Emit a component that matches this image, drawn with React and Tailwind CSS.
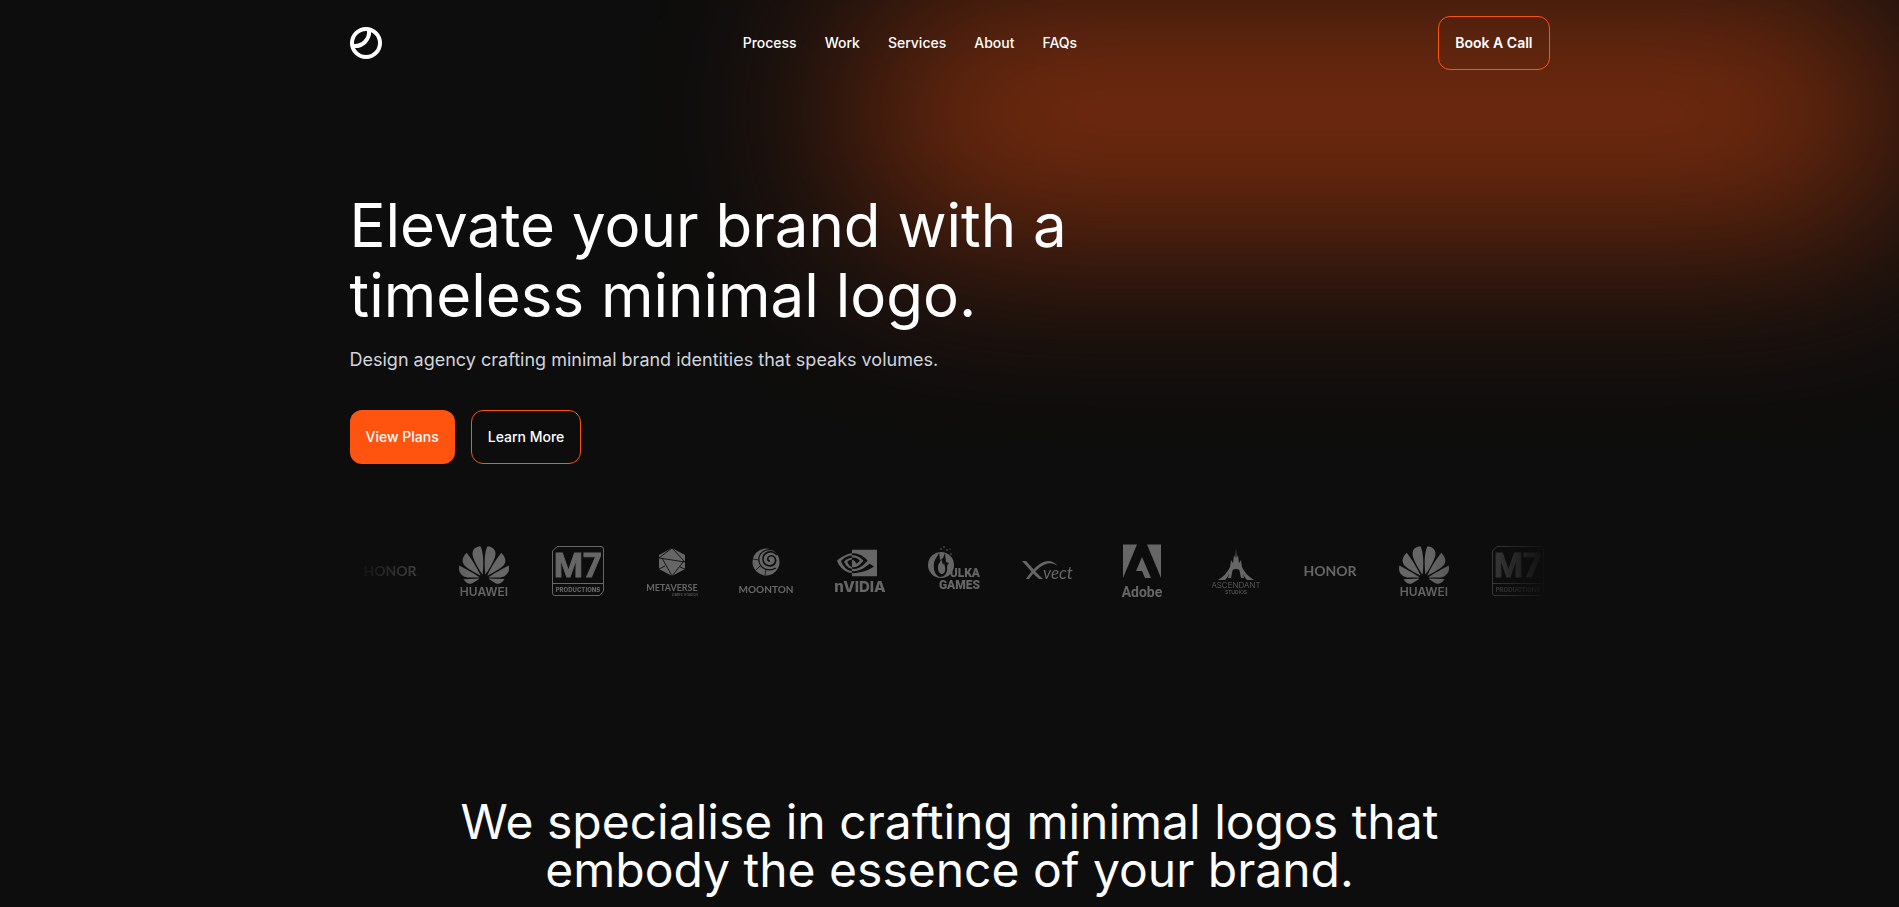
import { SiHuawei, SiNvidia } from 'react-icons/si';

const navLinks = ['Process', 'Work', 'Services', 'About', 'FAQs'];

function Logo() {
  return (
    <svg viewBox="0 0 32 32" className="size-8" fill="none" stroke="white" strokeWidth="4" aria-hidden="true">
      <circle cx="16" cy="16" r="14" />
      <path d="M19 3C20 12 13 20 3 19" />
    </svg>
  );
}

// Every brand mark is drawn on the same 54x54 box
function Mark({ name, children }) {
  return (
    <svg viewBox="0 0 54 54" role="img" aria-label={name} className="size-[54px] shrink-0 overflow-visible" fill="#666">
      {children}
    </svg>
  );
}

function Honor() {
  return (
    <Mark name="Honor">
      <text x="28" y="32" textAnchor="middle" className="font-[Lato] font-bold text-[14px]">HONOR</text>
    </Mark>
  );
}

function Huawei() {
  return (
    <Mark name="Huawei">
      <SiHuawei x="3" y="-4" size={50} fill="#666" />
      <text x="28" y="52" textAnchor="middle" className="font-semibold text-[12px]">HUAWEI</text>
    </Mark>
  );
}

function M7() {
  return (
    <Mark name="M7 Productions">
      <path d="M7 2.5H51a2.5 2.5 0 0 1 2.5 2.5V47l-4 4.5H5A2.5 2.5 0 0 1 2.5 49V7Z M2.5 39.5H53.5" fill="none" stroke="#666" />
      <text x="28" y="33" textAnchor="middle" className="font-[Roboto] font-bold text-[33px]" stroke="#666">M7</text>
      <text x="28" y="48" textAnchor="middle" className="font-extrabold text-[6px]">PRODUCTIONS</text>
    </Mark>
  );
}

function Metaverse() {
  return (
    <Mark name="Metaverse Game Studios">
      <path d="M28 4 41 11V25L28 32 15 25V11Z" />
      <path d="M28 4 15 14 41 18 28 4M18 14 28 32 40 17M15 25 21 22M36 23 41 25" fill="none" stroke="#0d0d0d" strokeWidth="0.9" />
      <text x="28" y="47" textAnchor="middle" className="font-[Lato] font-bold text-[9px]">METAVERSE</text>
      <text x="54" y="52" textAnchor="end" className="text-[4px]">Game Studios</text>
    </Mark>
  );
}

function Moonton() {
  return (
    <Mark name="Moonton">
      <circle cx="28" cy="18" r="13.5" />
      <g fill="none" stroke="#0d0d0d">
        <path d="M35 6C26 4 20 10 21 17c1 8 10 11 17 7" strokeWidth="1.2" />
        <path d="M39 11C34 5 25 8 25 15c0 7 9 9 12 4 2-4-1-8-5-7-3 1-3 5 0 5" strokeWidth="1.6" />
        <path d="M15 15 21 16M27 31 28 25M18 26 22 22" strokeWidth="0.8" />
      </g>
      <text x="28" y="49" textAnchor="middle" className="font-[Lato] font-bold text-[10px]">MOONTON</text>
    </Mark>
  );
}

function Nvidia() {
  return (
    <Mark name="Nvidia">
      <SiNvidia x="5" y="-1" size={40} fill="#666" />
      <text x="28" y="48" textAnchor="middle" className="font-extrabold text-[15px]">nVIDIA</text>
    </Mark>
  );
}

function Ulka() {
  return (
    <Mark name="Ulka Games">
      <circle cx="15" cy="21" r="13" />
      <path d="M13 8c-1 5-4 6-5 11-1 8 2 13 6 14 5 0 8-5 7-10 0-2 1-3 2-4l-3-1-1-9-2 5-3 2Z" fill="#0d0d0d" />
      <path d="M15 14c1 3-3 5-3 9 0 5 2 7 4 7s4-3 3-7l-1-4-1 2Z" />
      <circle cx="15" cy="5" r="0.8" />
      <circle cx="18" cy="3" r="0.8" />
      <circle cx="21" cy="6" r="0.8" />
      <circle cx="24" cy="5" r="0.6" />
      <circle cx="25" cy="10" r="0.8" />
      <text x="54" y="33" textAnchor="end" className="font-[Roboto] font-black text-[12px]">ULKA</text>
      <text x="54" y="45" textAnchor="end" className="font-[Roboto] font-black text-[12px]">GAMES</text>
    </Mark>
  );
}

function Xvect() {
  return (
    <Mark name="Xvect">
      <path d="M2 17H6C11 22 17 30 23 35H19C13 30 8 23 2 17Z" />
      <path d="M6 35C15 22 27 10 38 22 28 15 19 22 9 35Z" />
      <text x="23" y="35" className="font-[Lato] italic text-[17px]">vect</text>
    </Mark>
  );
}

function Adobe() {
  return (
    <Mark name="Adobe">
      <path d="M9 0.5H23L9 34ZM33 0.5H47V34ZM28 13 37 34H31L28 27H22Z" />
      <text x="28" y="53" textAnchor="middle" className="font-[Roboto] font-bold text-[14px]">Adobe</text>
    </Mark>
  );
}

function Ascendant() {
  return (
    <Mark name="Ascendant Studios">
      <path d="M28 4 28.7 14 30 11 31 19 33 16 34 23C37 29 41 33 46 36H39C37 34 36 32 35 30 33 27 31 25 28 25S23 27 21 30C20 32 19 34 17 36H10C15 33 19 29 22 23L23 16 25 19 26 11 27.3 14Z" />
      <path d="M25 24 23 34H20L22 24ZM31 24 33 34H36L34 24Z" />
      <text x="28" y="44" textAnchor="middle" className="font-light text-[8px]">ASCENDANT</text>
      <text x="28" y="50" textAnchor="middle" className="text-[5px]">STUDIOS</text>
    </Mark>
  );
}

const brands = [Honor, Huawei, M7, Metaverse, Moonton, Nvidia, Ulka, Xvect, Adobe, Ascendant, Honor, Huawei, M7];

function Navbar() {
  return (
    <nav className="flex items-center justify-between py-4">
      <a href="#home" aria-label="Home">
        <Logo />
      </a>
      <ul className="flex gap-7 text-sm font-medium">
        {navLinks.map((link) => (
          <li key={link}>
            <a href={`#${link.toLowerCase()}`}>{link}</a>
          </li>
        ))}
      </ul>
      <button type="button" className="rounded-xl border border-[#ff5310] p-4 text-sm font-semibold">
        Book A Call
      </button>
    </nav>
  );
}

function App() {
  return (
    <div className="relative min-h-screen overflow-hidden bg-[#0d0d0d] font-[Inter,sans-serif] text-white">
      {/* Orange glow behind the header */}
      <div className="absolute top-0 right-0 h-[225px] w-[1040px] rounded-[60px] bg-[#ff5310] opacity-50 blur-[100px]" />

      <div className="relative mx-auto max-w-[1200px]">
        <Navbar />

        <header className="pt-26">
          <h1 className="text-[60px] leading-[70px]">
            Elevate your brand with a
            <br />
            timeless minimal logo.
          </h1>
          <p className="mt-4 text-lg text-gray-300">
            Design agency crafting minimal brand identities that speaks volumes.
          </p>
          <div className="mt-9 flex gap-4 text-sm font-medium">
            <button type="button" className="rounded-xl bg-[#ff5310] p-4">
              View Plans
            </button>
            <button type="button" className="rounded-xl border border-[#ff5310] p-4">
              Learn More
            </button>
          </div>
        </header>

        <div className="mt-20 flex gap-10 overflow-hidden pb-2 pl-3 [mask-image:linear-gradient(to_right,transparent,black_10%,black_90%,transparent)]">
          {brands.map((Brand, i) => (
            <Brand key={i} />
          ))}
        </div>

        <section className="pt-48">
          <h2 className="text-center text-5xl leading-none">
            We specialise in crafting minimal logos that
            <br />
            embody the essence of your brand.
          </h2>
        </section>
      </div>
    </div>
  );
}

export default App;
